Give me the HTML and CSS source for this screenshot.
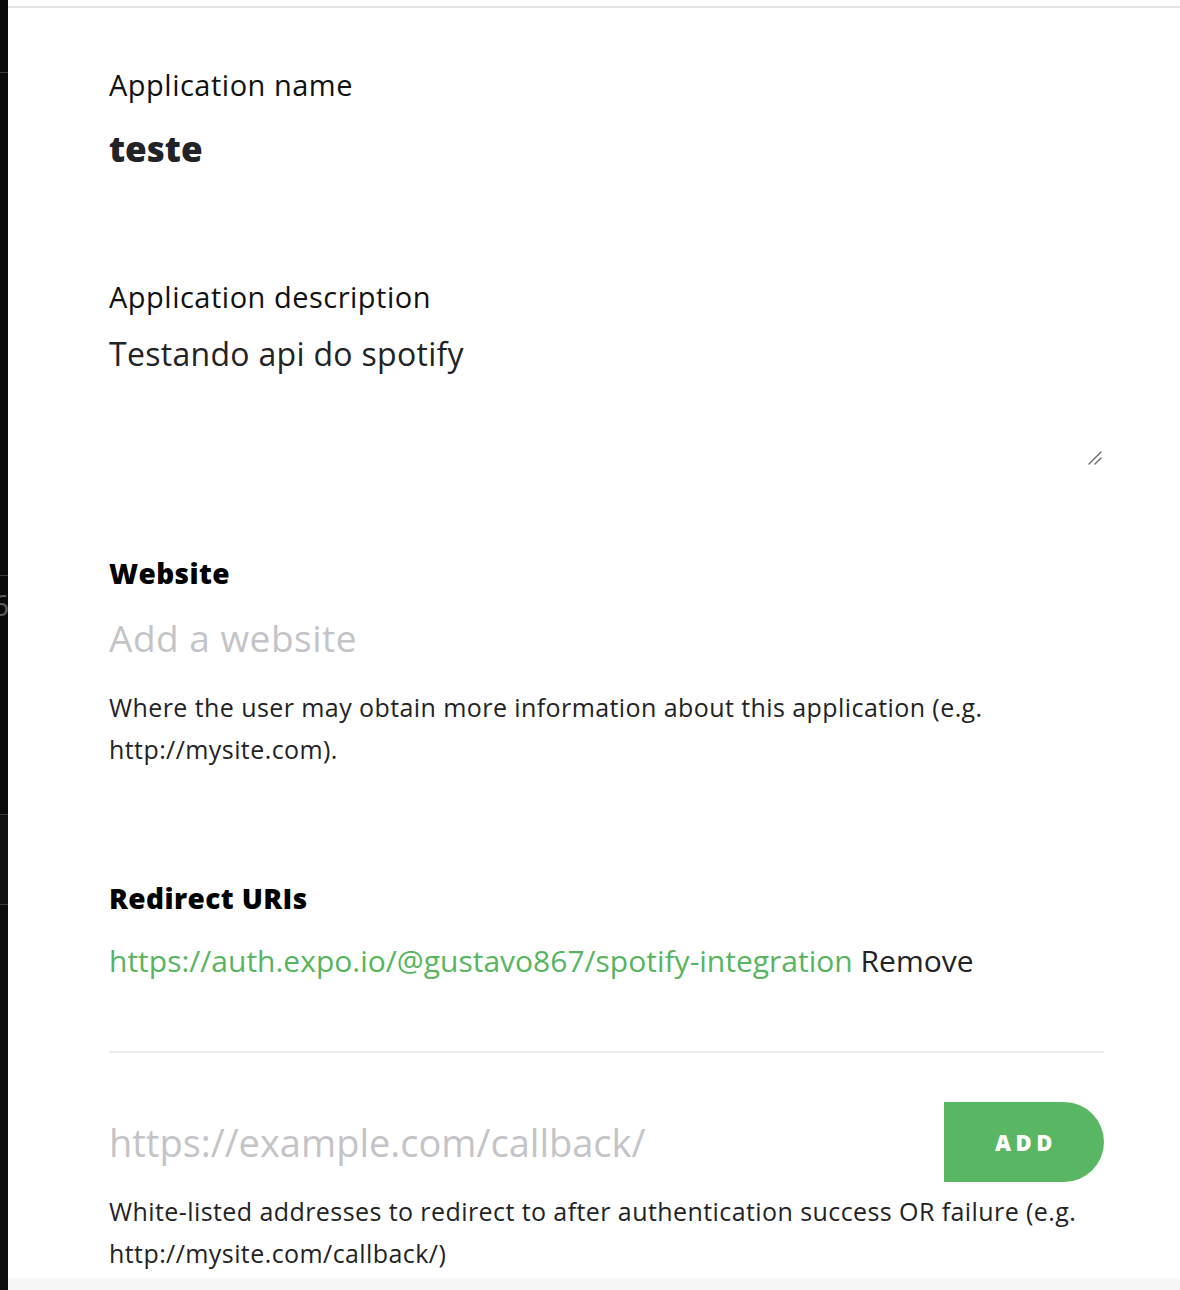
FILE: index.html
```html
<!DOCTYPE html>
<html>
<head>
<meta charset="utf-8">
<link rel="stylesheet" href="styles.css">
</head>
<body>
<div class="page">
  <aside class="strip">
    <div class="seg seg-a"></div>
    <div class="seg seg-b"></div>
    <div class="seg seg-c"><span class="ghost" aria-hidden="true">6</span></div>
    <div class="seg seg-d"></div>
    <div class="seg seg-e"></div>
  </aside>
  <main class="panel">
    <div class="form">
      <section class="field field-name">
        <div class="label">Application name</div>
        <div class="value-bold">teste</div>
      </section>
      <section class="field field-desc">
        <div class="label">Application description</div>
        <div class="textarea">
          <div class="value-medium">Testando api do spotify</div>
          <svg class="grip" width="14" height="14" viewBox="0 0 14 14"><path d="M1 13 L13 1 M7 13 L13 7" stroke="#666" stroke-width="1.3" stroke-linecap="round" fill="none"/></svg>
        </div>
      </section>
      <section class="field field-web">
        <div class="heading">Website</div>
        <div class="placeholder ph-web">Add a website</div>
        <p class="help">Where the user may obtain more information about this application (e.g. http://mysite.com).</p>
      </section>
      <section class="field field-uri">
        <div class="heading">Redirect URIs</div>
        <div class="uri-row"><span class="uri">https://auth.expo.io/@gustavo867/spotify-integration</span> <span class="remove">Remove</span></div>
        <div class="divider"></div>
        <div class="add-row">
          <div class="placeholder ph-uri">https://example.com/callback/</div>
          <button class="add-btn">ADD</button>
        </div>
        <p class="help help-uri">White-listed addresses to redirect to after authentication success OR failure (e.g. http://mysite.com/callback/)</p>
      </section>
    </div>
    <div class="footer"></div>
  </main>
</div>
</body>
</html>
```
FILE: styles.css
```css
html, body {
  margin: 0;
  padding: 0;
  background: #ffffff;
}
body {
  font-family: "Open Sans", "Liberation Sans", sans-serif;
  color: #222326;
}
.page {
  display: flex;
  width: 1180px;
  height: 1290px;
  overflow: hidden;
}
.strip {
  width: 8px;
  flex: none;
  display: flex;
  flex-direction: column;
  background: #0a0a0a;
}
.seg { border-bottom: 1px solid #3a3a3a; overflow: hidden; position: relative; }
.seg-a { height: 72px; }
.seg-b { height: 502px; }
.seg-c { height: 238px; background: #0a0a0a; }
.seg-d { height: 89px; background: #101010; }
.seg-e { flex: 1; border-bottom: none; background: #0c0c0c; }
.ghost {
  position: absolute;
  top: 14px;
  left: -8px;
  font-size: 30px;
  color: #5a5a5a;
  line-height: 1;
}
.panel {
  flex: 1;
  display: flex;
  flex-direction: column;
  padding-top: 6px;
}
.form {
  flex: 1;
  border-top: 2px solid #e4e4e4;
  padding: 0 76px 0 101px;
}
.footer {
  height: 12px;
  background: #f7f7f7;
}
.label {
  font-size: 29px;
  letter-spacing: 0.5px;
  line-height: 36px;
  color: #111;
}
.field-name { padding-top: 59px; }
.value-bold {
  font-size: 35px;
  font-weight: 800;
  line-height: 44px;
  margin-top: 24px;
  color: #222326;
}
.field-desc { padding-top: 108px; }
.textarea {
  position: relative;
  height: 170px;
  margin-top: 19px;
}
.value-medium {
  font-size: 32px;
  letter-spacing: 0.3px;
  line-height: 40px;
  font-weight: 500;
  color: #222326;
}
.grip {
  position: absolute;
  right: 2px;
  top: 117px;
}
.heading {
  font-size: 28px;
  letter-spacing: 0.4px;
  font-weight: 800;
  line-height: 36px;
  color: #000;
}
.field-web { padding-top: 51px; }
.placeholder {
  color: #c4c4c8;
  font-weight: 400;
}
.ph-web {
  font-size: 37px;
  letter-spacing: 0.5px;
  line-height: 46px;
  margin-top: 24px;
}
.help {
  margin: 0;
  font-size: 25px;
  letter-spacing: 0.42px;
  line-height: 42px;
  color: #222326;
}
.field-web .help { margin-top: 25px; }
.field-uri { padding-top: 110px; }
.uri-row {
  font-size: 30px;
  line-height: 40px;
  margin-top: 25px;
  color: #222326;
}
.uri { color: #57b560; }
.divider {
  height: 2px;
  background: #ededed;
  margin-top: 70px;
}
.add-row {
  display: flex;
  align-items: center;
  justify-content: space-between;
  margin-top: 49px;
}
.ph-uri {
  font-size: 38px;
  line-height: 48px;
}
.add-btn {
  width: 160px;
  height: 80px;
  border: none;
  border-radius: 0 40px 40px 0;
  background: #59b763;
  color: #fff;
  font-family: "Open Sans", "Liberation Sans", sans-serif;
  font-size: 22px;
  font-weight: 800;
  letter-spacing: 4.5px;
  padding: 0 0 0 4px;
}
.help-uri { margin-top: 8px; }
```
